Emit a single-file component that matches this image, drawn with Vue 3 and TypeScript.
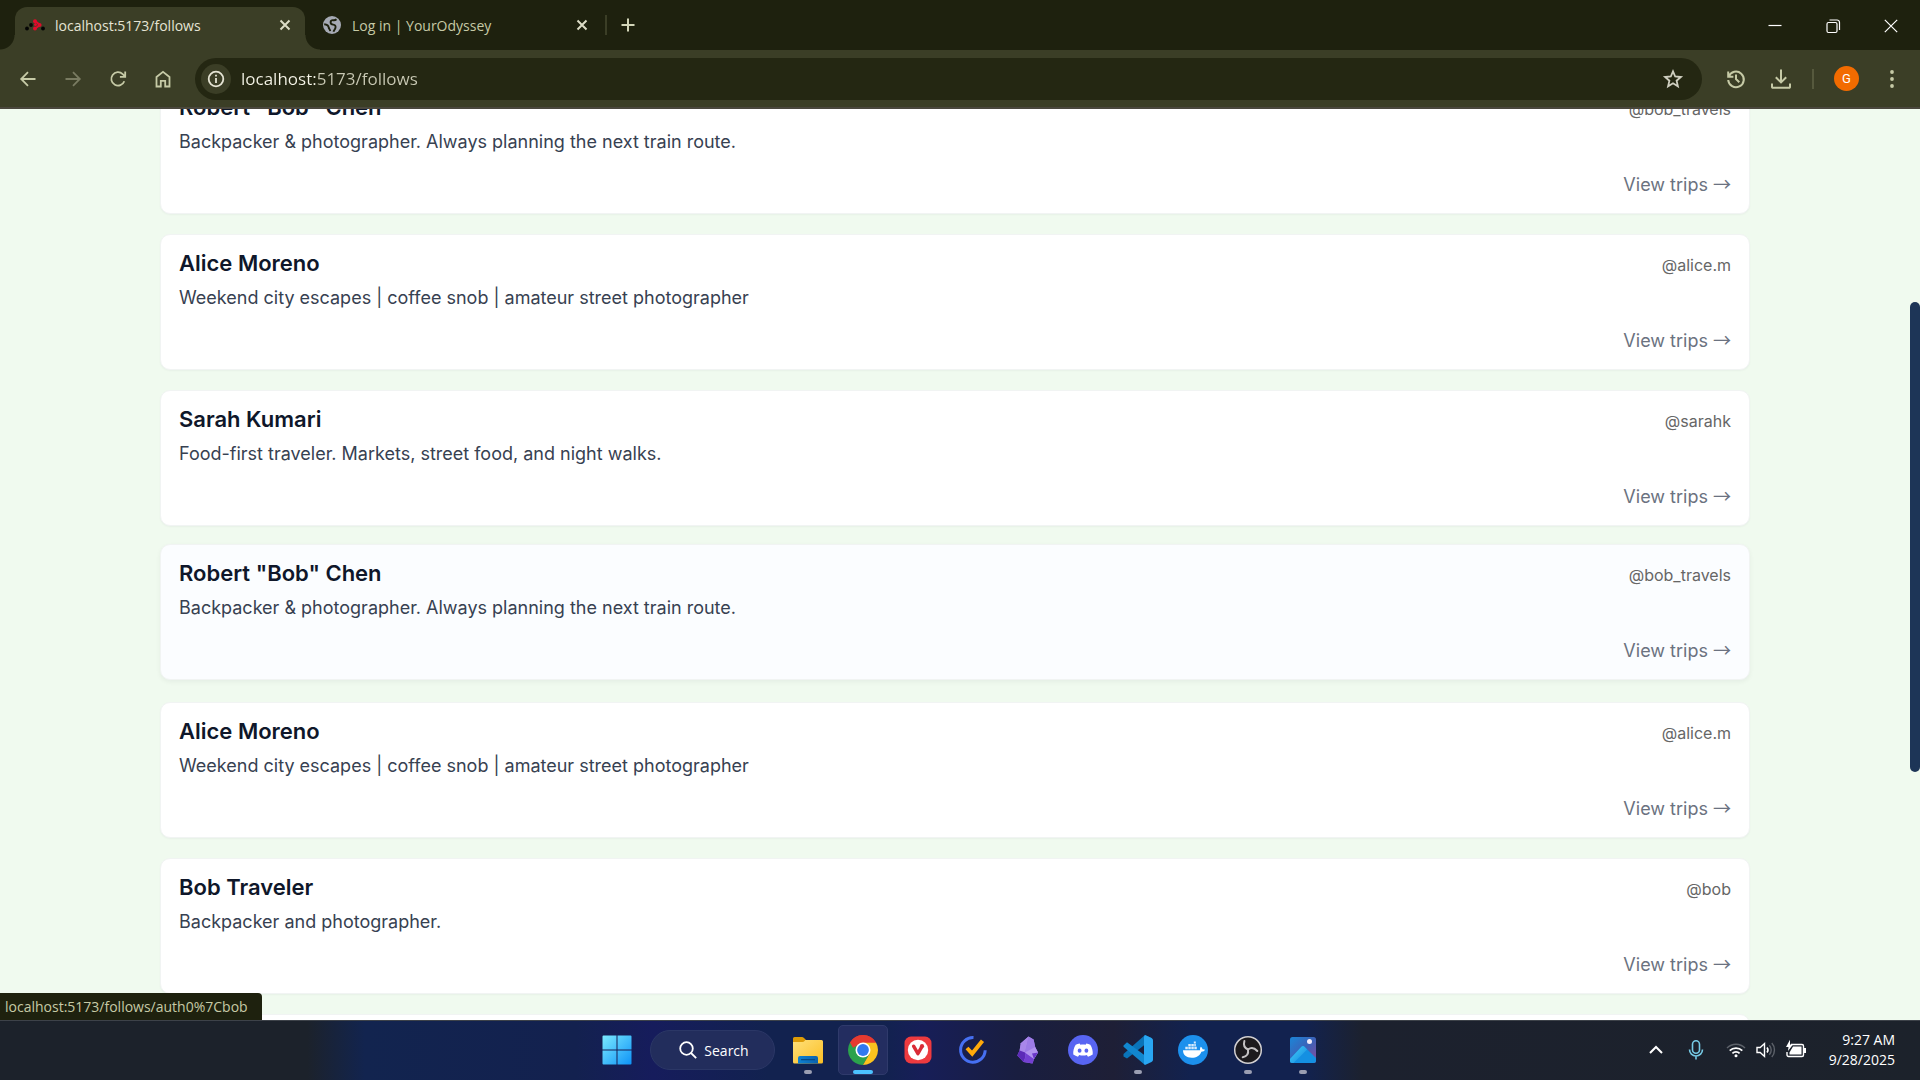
<script setup lang="ts">
import { ref } from 'vue'

interface Traveler {
  name: string
  handle: string
  bio: string
  hovered?: boolean
}

interface TaskbarApp {
  label: string
  icon: string
  running?: boolean
  active?: boolean
}

const address = ref('localhost:5173/follows')

const bob: Traveler = {
  name: 'Robert "Bob" Chen',
  handle: '@bob_travels',
  bio: 'Backpacker & photographer. Always planning the next train route.',
}
const alice: Traveler = {
  name: 'Alice Moreno',
  handle: '@alice.m',
  bio: 'Weekend city escapes | coffee snob | amateur street photographer',
}
const sarah: Traveler = {
  name: 'Sarah Kumari',
  handle: '@sarahk',
  bio: 'Food-first traveler. Markets, street food, and night walks.',
}

const travelers: Traveler[] = [
  bob,
  alice,
  sarah,
  { ...bob, hovered: true },
  alice,
  { name: 'Bob Traveler', handle: '@bob', bio: 'Backpacker and photographer.' },
  sarah,
]

const scroll = { top: 21.2, size: 51.6 }

const apps: TaskbarApp[] = [
  {
    label: 'File Explorer',
    running: true,
    icon: `<defs><linearGradient id="fold" x1="0" y1="0" x2="1" y2="1"><stop offset="0" stop-color="#ffe07a"/><stop offset="1" stop-color="#fbbf24"/></linearGradient><linearGradient id="foldb" x1="0" y1="0" x2="1" y2="0"><stop offset="0" stop-color="#0e82d2"/><stop offset="1" stop-color="#0b62ae"/></linearGradient></defs>
      <path d="M0 3.500a1.500 1.500 0 0 1 1.500-1.500h7.500q1 0 2 1l2 2h15v6H0z" fill="#dd9b07"/><path d="M0 7h9.500q1.200 0 2-1l.8-1H28.500a1.500 1.500 0 0 1 1.500 1.500V27a1.500 1.500 0 0 1-1.500 1.500h-27A1.500 1.500 0 0 1 0 27z" fill="url(#fold)"/><path d="M5 28.500v-5.500a2 2 0 0 1 2-2h16a2 2 0 0 1 2 2v5.500z" fill="url(#foldb)"/><path d="M8.500 24.700h13" stroke="#064a86" stroke-width="1.200" stroke-linecap="round"/>`,
  },
  {
    label: 'Google Chrome',
    running: true,
    active: true,
    icon: `<path d="M15 15 2.010 7.500A15 15 0 0 1 27.990 7.500z" fill="#e53a30"/><path d="M15 15 2.010 7.500A15 15 0 0 0 15 30l6.500-11.200z" fill="#2ba24c"/><path d="M27.990 7.500H15l6.500 11.300L15 30A15 15 0 0 0 27.990 7.500z" fill="#fcc31e"/><path d="M2.010 7.500l6.500 11.250L15 15V7.500z" fill="#2ba24c"/><path d="M2.010 7.500 5 12.700 8 11l7-3.500h13A15 15 0 0 0 2.010 7.500z" fill="#e53a30"/><circle cx="15" cy="15" r="7.500" fill="#fff"/><circle cx="15" cy="15" r="5.900" fill="#3179ee"/>`,
  },
  {
    label: 'Vivaldi',
    icon: `<rect x="1.500" y="1.500" width="27" height="27" rx="6.500" fill="#ee3a3f"/><circle cx="15" cy="15" r="10.200" fill="#fff"/><path d="M10.600 11.200 14.900 18.700 18.600 12.200" fill="none" stroke="#d92b36" stroke-width="3.400" stroke-linecap="round" stroke-linejoin="round"/><circle cx="19" cy="11.200" r="2.100" fill="#d92b36"/>`,
  },
  {
    label: 'TickTick',
    icon: `<path d="M15.500 2.600A12.300 12.300 0 1 0 27.200 15.300" fill="none" stroke="#4670f2" stroke-width="3"/><path d="m9 13 5.200 5.600L24.500 5.800" fill="none" stroke="#ffa90a" stroke-width="4"/>`,
  },
  {
    label: 'Obsidian',
    icon: `<path d="M15.500 1.500 7.800 8.200 6.600 15.500 4.300 20.500 10.500 27 19.500 28.500 21 24 25 17.500 22.200 12 20.600 4.600z" fill="#9a72e4"/><path d="M15.500 1.500 7.800 8.200 6.600 15.500 12 17.500 14 9z" fill="#a987ea"/><path d="M15.500 1.500 14 9l-2 8.500 6.500-2.500 3.700-3-1.600-7.400z" fill="#9d7ce6"/><path d="M6.600 15.500 4.300 20.500 10.500 27 12.500 22 12 17.500z" fill="#5c2bb8"/><path d="M12 17.500 12.500 22l-2 5 9 1.500 1.500-4.500z" fill="#7440d2"/><path d="m12 17.500 9 6.500 4-6.500-2.800-5.500z" fill="#b193ee"/><path d="m21 24 4-6.500-6 1z" fill="#6b38c8"/>`,
  },
  {
    label: 'Discord',
    icon: `<circle cx="15" cy="15" r="15" fill="#5865f2"/><path d="M11.700 8.400c-1.500.3-2.700.7-4 1.400-1.900 3-2.700 6.200-2.400 9.700 1.500 1.100 3 1.800 4.700 2.300l1.200-1.900c2.500.7 5.100.7 7.600 0l1.200 1.900c1.700-.5 3.200-1.200 4.700-2.300.3-3.500-.5-6.700-2.400-9.700-1.300-.7-2.500-1.100-4-1.400l-.7 1.300c-1.700-.3-3.500-.3-5.200 0z" fill="#fff"/><ellipse cx="11.600" cy="15.700" rx="1.900" ry="2.100" fill="#5865f2"/><ellipse cx="18.400" cy="15.700" rx="1.900" ry="2.100" fill="#5865f2"/>`,
  },
  {
    label: 'Visual Studio Code',
    running: true,
    icon: `<path d="M22 0 29 3.300 22 9.500 4 23.500 0.500 21.500v-2.500z" fill="#0a74b9"/><path d="M.5 10.500 4 7.200 22 20.500V30L.5 11.800z" fill="#1187cf"/><path d="M22 0 28.500 3q1.500.7 1.500 2.200v19.600q0 1.500-1.500 2.200L22 30l-1-1.500V1.500z" fill="#29a6f2"/>`,
  },
  {
    label: 'Docker Desktop',
    icon: `<circle cx="15" cy="15" r="15" fill="#1c90ed"/><path d="M5 15.300h17.200c-.4-1.300-.1-2.600.6-3.600 1.100.7 1.600 1.500 1.700 2.500 1-.1 1.900.1 2.600.6-.7 1.300-1.900 1.900-3.700 1.900-1.700 4.100-5 6-9.600 6-5.600 0-8.700-2.500-8.800-7.400z" fill="#fff"/><path d="M7.300 11.700h2.500v2.500H7.300zM10.300 11.700h2.500v2.500h-2.500zM13.300 11.700h2.500v2.500h-2.500zM16.300 11.700h2.500v2.500h-2.500zM10.300 8.900h2.500v2.400h-2.500zM13.300 8.900h2.500v2.400h-2.500zM16.300 8.900h1.500v2.400h-1.500zM15.800 6.600h2v1.800h-2z" fill="#d6ebfd"/>`,
  },
  {
    label: 'OBS Studio',
    running: true,
    icon: `<circle cx="15" cy="15" r="13.300" fill="#1c1a1d" stroke="#d2d0d2" stroke-width="1.500"/><g fill="none" stroke="#c4c2c4" stroke-width="2" stroke-linecap="round"><path d="M15 14.500C11.500 13 10.300 9.800 11.400 6"/><path d="M15 14.500c3-2.200 6.600-1.500 9.300 1.500"/><path d="M15 14.500c.7 4-1.400 7-5.300 7.800"/></g>`,
  },
  {
    label: 'Photos',
    running: true,
    icon: `<defs><linearGradient id="phbg" x1="0" y1="0" x2="1" y2="1"><stop offset="0" stop-color="#1b86d8"/><stop offset=".5" stop-color="#3b62b8"/><stop offset="1" stop-color="#8b4a9e"/></linearGradient><linearGradient id="phm" x1="0" y1="0" x2="1" y2="1"><stop offset="0" stop-color="#45d0f6"/><stop offset="1" stop-color="#1186e2"/></linearGradient></defs><rect x="2" y="2" width="26" height="26" rx="2.500" fill="url(#phbg)"/><path d="M2 24 13.500 11.800q1.500-1.400 3 0L28 23v2.500a2.500 2.500 0 0 1-2.500 2.500h-21A2.500 2.500 0 0 1 2 25.500z" fill="#1490e2"/><path d="M2 24 13.500 11.800q1.500-1.400 3 0l2.600 2.600L5.500 28h-1A2.500 2.500 0 0 1 2 25.500z" fill="url(#phm)"/><circle cx="21.500" cy="6.500" r="2.500" fill="#f2ecfa"/>`,
  },
]
</script>

<template>
  <div class="desktop">
    <header class="browser">
      <div class="tab-strip">
        <div class="tab active">
          <svg class="favicon" viewBox="0 0 20 20">
            <g fill="#050505"><circle cx="2" cy="13.500" r="1.900" /><circle cx="6" cy="10" r="1.900" /><circle cx="18" cy="13.500" r="1.900" /></g>
            <path d="M9.500 5.500 15 10 10.500 13.200" fill="none" stroke="#e00b2b" stroke-width="2" />
            <g fill="#e00b2b"><circle cx="10" cy="6.200" r="2" /><circle cx="14.500" cy="10" r="2" /><circle cx="10" cy="13.500" r="2" /><circle cx="10.500" cy="9.500" r="1.500" /></g>
          </svg>
          <span class="tab-title">localhost:5173/follows</span>
          <button class="tab-close" aria-label="Close tab">
            <svg viewBox="0 0 12 12"><path d="M1.500 1.500l9 9M10.500 1.500l-9 9" /></svg>
          </button>
        </div>
        <div class="tab">
          <svg class="favicon" viewBox="0 0 20 20">
            <circle cx="10" cy="10" r="9" fill="#a6aab4" />
            <path d="M14.500 4.300c-1 .9-2 1.100-3.300.9-1.800-.2-2.700.8-2.600 2.200.1 1.800 1.200 2.100 2.600 2.200 1.900.2 2.600 1.300 2.300 3-.3 1.800-1.600 2.300-2 4.200M2.200 9.300c2.600.3 4.300 1.300 4.500 3.200.2 1.500 1.300 1.700 1.500 3.700" fill="none" stroke="#1e210e" stroke-width="1.900" />
          </svg>
          <span class="tab-title">Log in | YourOdyssey</span>
          <button class="tab-close" aria-label="Close tab">
            <svg viewBox="0 0 12 12"><path d="M1.500 1.500l9 9M10.500 1.500l-9 9" /></svg>
          </button>
        </div>
        <span class="strip-divider"></span>
        <button class="new-tab" aria-label="New tab">
          <svg viewBox="0 0 14 14"><path d="M7 .5v13M.5 7h13" /></svg>
        </button>
        <div class="window-controls">
          <button aria-label="Minimize"><svg viewBox="0 0 14 14"><path d="M.5 6.500h13" /></svg></button>
          <button aria-label="Restore">
            <svg viewBox="0 0 14 14"><rect x="1" y="3.500" width="10" height="10" rx="1.500" /><path d="M3.500 1H11a2.500 2.500 0 0 1 2.500 2.500V11" /></svg>
          </button>
          <button aria-label="Close"><svg viewBox="0 0 14 14"><path d="M.8.8l12.400 12.400M13.200.8.8 13.200" /></svg></button>
        </div>
      </div>

      <div class="toolbar">
        <button class="tool" aria-label="Back"><svg viewBox="0 0 20 20"><path d="M17.500 10H3.500M10 3.200 3.200 10l6.800 6.800" /></svg></button>
        <button class="tool dim" aria-label="Forward"><svg viewBox="0 0 20 20"><path d="M2.500 10h14M10 3.200l6.800 6.800-6.800 6.800" /></svg></button>
        <button class="tool" aria-label="Reload"><svg viewBox="0 0 20 20"><path d="M16.300 12.200A6.700 6.700 0 1 1 14.700 5.100L17 7.300M17.200 2.500v5.300h-5.300" /></svg></button>
        <button class="tool" aria-label="Home"><svg viewBox="0 0 20 20"><path d="M3.500 17.500V8L10 2.800 16.500 8v9.500h-4.300v-5.700H7.800v5.700z" /></svg></button>

        <div class="omnibox">
          <button class="site-info" aria-label="Site information">
            <svg viewBox="0 0 20 20"><circle cx="10" cy="10" r="7.300" /><path d="M10 9v5M10 5.700v1.900" /></svg>
          </button>
          <input v-model="address" class="address" type="text" aria-label="Address" spellcheck="false" />
          <button class="star" aria-label="Bookmark this tab">
            <svg viewBox="0 0 20 20"><path d="M10 2.300l2.200 5.200 5.700.5-4.300 3.700 1.300 5.600-4.900-3-4.900 3 1.300-5.600L2.100 8l5.700-.5z" /></svg>
          </button>
        </div>

        <button class="tool bold" aria-label="History">
          <svg viewBox="0 0 20 20"><path d="M2.700 7.600A7.800 7.800 0 1 1 2.200 11M2.200 2.500v5.200h5.200M10 5.500V10l3.300 3.300" /></svg>
        </button>
        <button class="tool bold" aria-label="Downloads">
          <svg viewBox="0 0 20 20"><path d="M10 .5v12M4.800 8.200l5.200 5.200 5.200-5.200M1 14.500V18a.8.8 0 0 0 .8.800h16.400a.8.800 0 0 0 .8-.8v-3.500" /></svg>
        </button>
        <span class="tool-divider"></span>
        <button class="avatar" aria-label="Profile">G</button>
        <button class="tool menu" aria-label="Menu">
          <svg viewBox="0 0 20 20"><circle cx="10" cy="3" r="1.900" /><circle cx="10" cy="10" r="1.900" /><circle cx="10" cy="17" r="1.900" /></svg>
        </button>
      </div>
    </header>

    <main class="page">
      <div class="scroller">
        <ul class="follows">
          <li v-for="(person, i) in travelers" :key="i">
            <a class="card" :class="{ hovered: person.hovered }" href="#">
              <span class="card-head">
                <span class="name">{{ person.name }}</span>
                <span class="handle">{{ person.handle }}</span>
              </span>
              <span class="bio">{{ person.bio }}</span>
              <span class="view">View trips <span class="arrow">→</span></span>
            </a>
          </li>
        </ul>
      </div>
      <div class="track">
        <div class="thumb" :style="{ top: scroll.top + '%', height: scroll.size + '%' }"></div>
      </div>
      <div class="link-status">localhost:5173/follows/auth0%7Cbob</div>
    </main>

    <footer class="taskbar">
      <div class="side"></div>
      <nav class="launchers" aria-label="Taskbar">
        <button class="tile" aria-label="Start">
          <svg class="app-icon" viewBox="0 0 30 30">
            <defs>
              <linearGradient id="win" x1="0" y1="0" x2="1" y2="1">
                <stop offset="0" stop-color="#7beafe" /><stop offset="1" stop-color="#0e93f7" />
              </linearGradient>
            </defs>
            <path d="M1.500.500H14.500V14.500H.5V1.500a1 1 0 0 1 1-1zM15.500.500h13a1 1 0 0 1 1 1v13h-14zM.5 15.500h14v14h-13a1 1 0 0 1-1-1zM15.500 15.500h14v13a1 1 0 0 1-1 1h-13z" fill="url(#win)" />
          </svg>
        </button>
        <button class="search">
          <svg viewBox="0 0 18 18"><circle cx="7.500" cy="7.500" r="6.300" /><path d="M12 12l5.200 5.200" /></svg>
          Search
        </button>
        <button
          v-for="app in apps"
          :key="app.label"
          class="tile"
          :class="{ active: app.active, running: app.running }"
          :aria-label="app.label"
        >
          <svg class="app-icon" viewBox="0 0 30 30" v-html="app.icon"></svg>
        </button>
      </nav>
      <div class="side">
        <button class="tray-button chevron" aria-label="Show hidden icons">
          <svg viewBox="0 0 20 20"><path d="M4 13l6-6 6 6" /></svg>
        </button>
        <button class="tray-button mic" aria-label="Microphone in use">
          <svg viewBox="0 0 20 20"><rect x="6.500" y=".8" width="7" height="12.400" rx="3.500" /><path d="M3.500 9.500a6.500 6.500 0 0 0 13 0M10 16v3.500" /></svg>
        </button>
        <button class="tray-button status" aria-label="Network, volume and battery">
          <svg viewBox="0 0 20 20">
            <path d="M1 8a12.700 12.700 0 0 1 18 0" stroke="#5d626a" /><path d="M3.700 10.700a8.900 8.900 0 0 1 12.600 0M6.400 13.400a5.100 5.100 0 0 1 7.200 0" stroke-width="1.700" /><circle cx="10" cy="15.800" r="1.500" fill="#fff" stroke="none" />
          </svg>
          <svg viewBox="0 0 20 20">
            <path d="M1 7.500h3.200L8.500 3.500v13L4.200 12.500H1z" /><path d="M11 7.500a4 4 0 0 1 0 5" stroke-width="1.600" /><path d="M13.300 5.200a7 7 0 0 1 0 9.600M15.800 3a10.500 10.500 0 0 1 0 14" stroke="#5d626a" />
          </svg>
          <svg viewBox="0 0 20 20">
            <path d="M5 4.500h11a1.500 1.500 0 0 1 1.500 1.500v9a1.500 1.500 0 0 1-1.500 1.500H2.500a1.500 1.500 0 0 1-1.500-1.500v-3" /><path d="M7 6.500h8.500v8H3.500v-2zM18 8h2v5h-2zM4-.2 0 7h2.500L2 11l5-6.500H4z" fill="#fff" stroke="none" />
          </svg>
        </button>
        <div class="clock"><span>9:27 AM</span><span>9/28/2025</span></div>
      </div>
    </footer>
  </div>
</template>

<style>
body {
  margin: 0;
  overflow: hidden;
}
</style>

<style scoped>
* {
  box-sizing: border-box;
}

.desktop {
  display: flex;
  flex-direction: column;
  height: 100vh;
  font-family: 'Open Sans', 'Noto Sans', sans-serif;
}

button {
  display: flex;
  align-items: center;
  justify-content: center;
  padding: 0;
  border: 0;
  background: none;
  color: inherit;
  font-family: inherit;
}

svg {
  display: block;
  flex: none;
  overflow: visible;
}

/* Browser frame */
.browser {
  flex: none;
  background: #3b3e26;
  border-bottom: 2px solid #4a473d;
}

.tab-strip {
  display: flex;
  align-items: flex-end;
  height: 50px;
  padding-left: 15px;
  background: #1e210e;
}

.tab {
  position: relative;
  display: flex;
  align-items: center;
  gap: 10px;
  width: 290px;
  height: 43px;
  padding: 0 10px 7px;
  color: #c6caa6;
  font-size: 14px;
}

.tab + .tab {
  margin-left: 7px;
}

.tab.active {
  border-radius: 12px 12px 0 0;
  background: #3b3e26;
  color: #e5e4d4;
}

.tab.active::before,
.tab.active::after {
  content: '';
  position: absolute;
  bottom: 0;
  width: 15px;
  height: 15px;
}

.tab.active::before {
  right: 100%;
  background: radial-gradient(circle at 0 0, #1e210e 14px, #3b3e26 15px);
}

.tab.active::after {
  left: 100%;
  background: radial-gradient(circle at 100% 0, #1e210e 14px, #3b3e26 15px);
}

.favicon {
  width: 20px;
  height: 20px;
}

.tab-title {
  flex: 1;
  white-space: nowrap;
}

.tab-close {
  width: 20px;
  height: 20px;
}

.tab-close svg {
  width: 12px;
  height: 12px;
  fill: none;
  stroke: #dcdcc6;
  stroke-width: 2;
}

.strip-divider {
  width: 2px;
  height: 20px;
  margin: 0 1px 15px 3px;
  background: #3b3e26;
}

.new-tab {
  width: 40px;
  height: 50px;
}

.new-tab svg {
  width: 14px;
  height: 14px;
  stroke: #d2d5b8;
  stroke-width: 2;
}

.window-controls {
  display: flex;
  margin-left: auto;
}

.window-controls button {
  width: 58px;
  height: 49px;
}

.window-controls svg {
  width: 14px;
  height: 14px;
  fill: none;
  stroke: #fff;
  stroke-width: 1.2;
}

.toolbar {
  display: flex;
  align-items: center;
  height: 57px;
  padding: 0 6px 0 5px;
}

.tool {
  flex: none;
  width: 45px;
  height: 42px;
}

.tool svg {
  width: 20px;
  height: 20px;
  fill: none;
  stroke: #c6caa6;
  stroke-width: 1.8;
}

.tool.dim svg {
  stroke: #797b61;
}

.tool.bold svg {
  stroke-width: 2;
}

.tool.menu svg {
  fill: #c6caa6;
  stroke: none;
}

.omnibox {
  display: flex;
  flex: 1;
  align-items: center;
  height: 42px;
  margin: 0 11px 0 10px;
  padding: 0 19px 0 6px;
  border-radius: 21px;
  background: #242712;
}

.site-info {
  width: 30px;
  height: 30px;
  border-radius: 50%;
  background: #3b3e26;
}

.site-info svg,
.star svg {
  width: 20px;
  height: 20px;
  fill: none;
  stroke: #e5e4d4;
  stroke-width: 1.8;
}

.star svg {
  stroke: #cfcfc0;
}

.address {
  flex: 1;
  min-width: 0;
  height: 30px;
  margin-left: 10px;
  padding: 0;
  border: 0;
  outline: 0;
  background: linear-gradient(90deg, #f6f5e8 76px, #c9c9b4 76px);
  background-clip: text;
  color: transparent;
  font-family: inherit;
  font-size: 17px;
}

.tool-divider {
  width: 2px;
  height: 20px;
  margin: 0 20px 0 9px;
  background: #56593d;
}

.avatar {
  width: 25px;
  height: 25px;
  margin-right: 10px;
  border-radius: 50%;
  background: #f26b00;
  color: #fff;
  font-family: Roboto, sans-serif;
  font-size: 13px;
}

/* Follows page */
.page {
  position: relative;
  display: flex;
  flex: 1;
  min-height: 0;
  overflow: hidden;
  background: #f0faef;
  font-family: Inter, sans-serif;
}

.scroller {
  flex: 1;
  overflow: hidden;
}

.follows {
  display: flex;
  flex-direction: column;
  gap: 20px;
  margin: -31px 160px 0;
  padding: 0;
  list-style: none;
}

.card {
  display: flex;
  flex-direction: column;
  padding: 15px 18px 14px;
  border: 1px solid #f1f4f3;
  border-radius: 10px;
  background: #fff;
  box-shadow: 0 1px 2px rgba(15, 23, 42, 0.04);
  color: #374151;
  font-size: 18px;
  line-height: 28px;
  text-decoration: none;
}

.card.hovered {
  background: #fbfdff;
  box-shadow: 0 2px 5px rgba(15, 23, 42, 0.05);
  transform: translateY(-2px);
}

.card-head {
  display: flex;
  align-items: baseline;
  justify-content: space-between;
  margin-bottom: 8px;
}

.name {
  color: #0f172a;
  font-size: 22px;
  font-weight: 600;
  line-height: 26px;
}

.handle {
  color: #666;
  font-size: 16px;
  line-height: 20px;
}

.bio {
  font-optical-sizing: none;
}

.view {
  align-self: flex-end;
  height: 28px;
  margin-top: 15px;
  color: #6b7280;
}

.arrow {
  font-family: 'Noto Sans CJK SC', sans-serif;
  line-height: 20px;
}

.track {
  position: relative;
  width: 10px;
}

.thumb {
  position: absolute;
  right: 0;
  left: 0;
  border-radius: 5px;
  background: #1d3557;
}

.link-status {
  position: absolute;
  bottom: 0;
  left: 0;
  height: 27px;
  padding: 0 14px 0 5px;
  border-radius: 0 4px 0 0;
  background: #1e210e;
  color: #c6caa6;
  font-family: 'Open Sans', 'Noto Sans', sans-serif;
  font-size: 14px;
  line-height: 27px;
}

/* Taskbar */
.taskbar {
  display: flex;
  flex: none;
  align-items: center;
  height: 60px;
  padding-bottom: 1px;
  border-top: 1px solid #3d4249;
  background: linear-gradient(
    90deg,
    #1c222b 0%,
    #1c222b 16%,
    #12244f 19%,
    #13214f 30%,
    #161c5c 34%,
    #12224f 40%,
    #12224f 46%,
    #171e58 48%,
    #191e40 53%,
    #1e1f36 58%,
    #12224f 62%,
    #12224f 68%,
    #1c212e 71%,
    #1c222b 100%
  );
  color: #fff;
}

.side {
  display: flex;
  flex: 1;
  align-items: center;
  justify-content: flex-end;
}

.launchers {
  display: flex;
  gap: 5px;
}

.tile {
  position: relative;
  width: 50px;
  height: 50px;
  border: 1px solid transparent;
  border-radius: 5px;
}

.app-icon {
  width: 30px;
  height: 30px;
}

.tile.active {
  border-color: #2f3a6b;
  background: #232d60;
}

.tile.running::after {
  content: '';
  position: absolute;
  bottom: 0;
  left: 20px;
  width: 8px;
  height: 4px;
  border-radius: 2px;
  background: #9a9eb2;
}

.tile.active::after {
  left: 14px;
  width: 20px;
  background: #4cc2ff;
}

.search {
  gap: 7px;
  width: 125px;
  height: 40px;
  margin: 5px 3px;
  padding-left: 3px;
  border: 1px solid #2b3766;
  border-radius: 20px;
  background: #222d5c;
  font-size: 14px;
}

.search svg {
  width: 18px;
  height: 18px;
  fill: none;
  stroke: #fff;
  stroke-width: 1.8;
}

.tray-button {
  width: 40px;
  height: 40px;
}

.tray-button svg {
  width: 20px;
  height: 20px;
  fill: none;
  stroke: #fff;
  stroke-width: 1.4;
}

.chevron svg {
  stroke-width: 2;
}

.mic svg {
  stroke: #76cbe6;
  stroke-width: 1.6;
}

.status {
  gap: 10px;
  width: 100px;
}

.clock {
  display: flex;
  flex-direction: column;
  align-items: flex-end;
  width: 104px;
  padding-right: 25px;
  font-size: 14px;
  line-height: 20px;
}
</style>
